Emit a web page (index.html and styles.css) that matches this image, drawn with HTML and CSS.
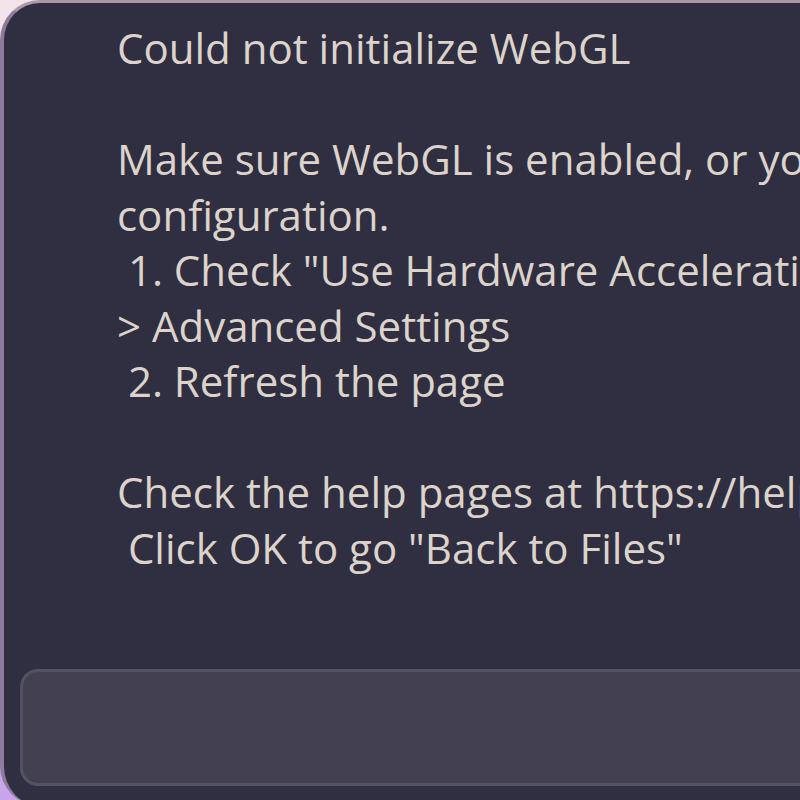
FILE: index.html
```html
<!DOCTYPE html>
<html>
<head>
<meta charset="utf-8">
<link rel="stylesheet" href="styles.css">
</head>
<body>
<div class="dialog">
  <div class="message">
    <div class="line">Could not initialize WebGL</div>
    <div class="line">&nbsp;</div>
    <div class="line">Make sure WebGL is enabled, or your browser supports WebGL</div>
    <div class="line">configuration.</div>
    <div class="line"> 1. Check "Use Hardware Acceleration when available" in Settings</div>
    <div class="line">&gt; Advanced Settings</div>
    <div class="line"> 2. Refresh the page</div>
    <div class="line">&nbsp;</div>
    <div class="line">Check the help pages at https://help.example.com</div>
    <div class="line"> Click OK to go "Back to Files"</div>
  </div>
  <div class="input-box"></div>
</div>
</body>
</html>
```

FILE: styles.css
```css
html, body {
  margin: 0;
  padding: 0;
  width: 800px;
  height: 800px;
  overflow: hidden;
}
body {
  background: linear-gradient(180deg, #f4e4ea 0%, #e0c8e8 60%, #c9a4ec 100%);
}
.dialog {
  box-sizing: border-box;
  width: 1100px;
  height: 806px;
  border-left: 4px solid #8c7c9c;
  border-top: 3px solid #a898a8;
  border-radius: 40px 0 0 40px;
  background: #2f2f41;
  display: flex;
  flex-direction: column;
  padding: 17px 0 20px 16px;
}
.message {
  padding-left: 97px;
  font-family: "Open Sans", "Noto Sans", sans-serif;
  font-size: 42px;
  font-weight: 500;
  line-height: 55.5px;
  color: #dcd3cb;
  flex: 1;
}
.line {
  white-space: pre;
}
.input-box {
  height: 111px;
  border: 3px solid #535262;
  border-right: none;
  border-radius: 18px 0 0 18px;
  background: #434150;
}
```
